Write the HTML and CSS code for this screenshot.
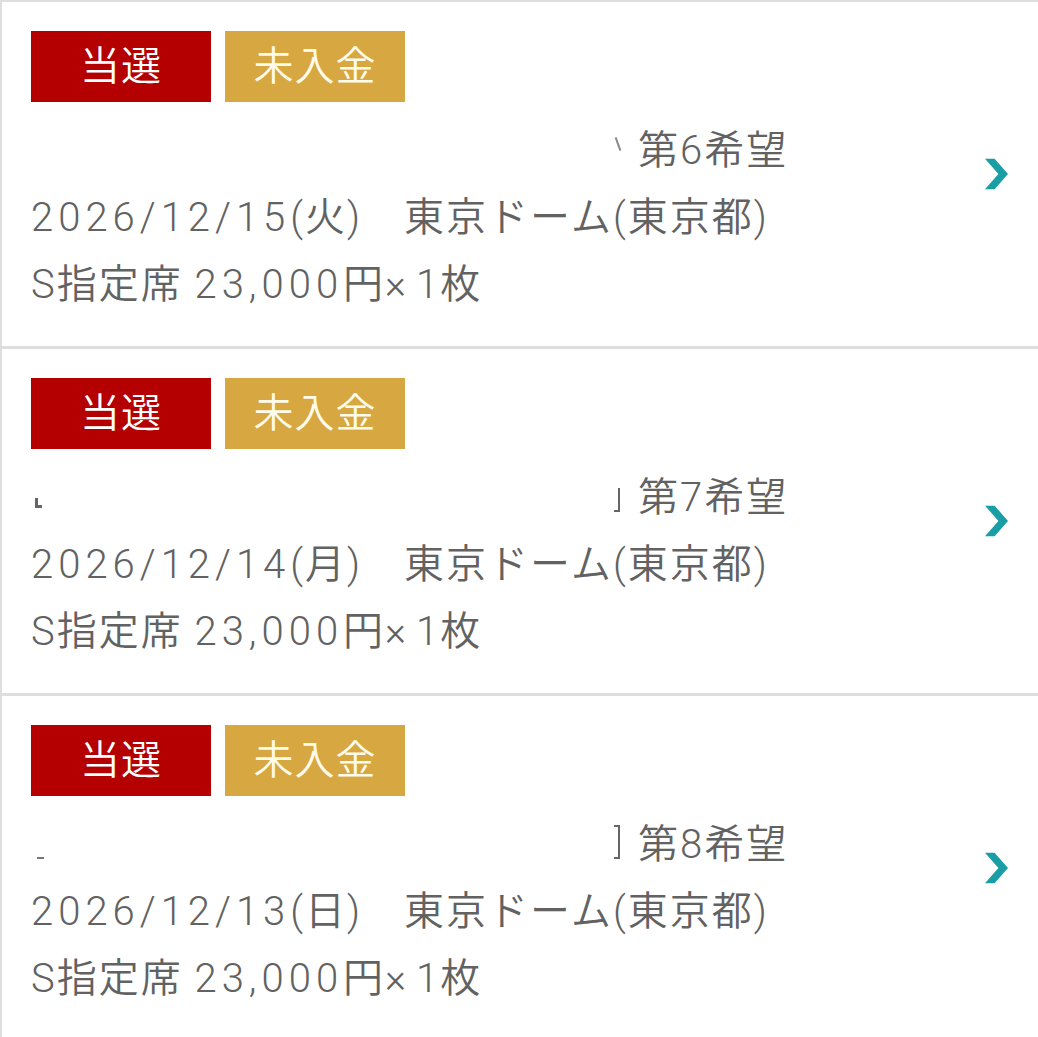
FILE: index.html
```html
<!DOCTYPE html>
<html lang="ja">
<head>
<meta charset="utf-8">
<title>申込履歴</title>
<link rel="stylesheet" href="styles.css">
</head>
<body>
<ul class="list">
  <li class="card">
    <div class="card-body">
      <div class="badges"><span class="badge badge-won">当選</span><span class="badge badge-unpaid">未入金</span></div>
      <p class="line title"><span class="redacted"></span><span class="frag frag-a"></span>第6希望</p>
      <p class="line"><span class="num">2026/12/15</span>(火)　東京ドーム(東京都)</p>
      <p class="line">S指定席 <span class="num">23,000</span>円<span class="qty">×</span>1枚</p>
    </div>
    <svg class="chevron" viewBox="0 0 24 32" aria-hidden="true"><polygon points="0,0 10,0 24,16 10,32 0,32 14,16"/></svg>
  </li>
  <li class="card">
    <div class="card-body">
      <div class="badges"><span class="badge badge-won">当選</span><span class="badge badge-unpaid">未入金</span></div>
      <p class="line title"><span class="redacted"><span class="frag frag-l"></span></span><span class="frag frag-b"></span>第7希望</p>
      <p class="line"><span class="num">2026/12/14</span>(月)　東京ドーム(東京都)</p>
      <p class="line">S指定席 <span class="num">23,000</span>円<span class="qty">×</span>1枚</p>
    </div>
    <svg class="chevron" viewBox="0 0 24 32" aria-hidden="true"><polygon points="0,0 10,0 24,16 10,32 0,32 14,16"/></svg>
  </li>
  <li class="card">
    <div class="card-body">
      <div class="badges"><span class="badge badge-won">当選</span><span class="badge badge-unpaid">未入金</span></div>
      <p class="line title"><span class="redacted"><span class="frag frag-dash"></span></span><span class="frag frag-c"></span>第8希望</p>
      <p class="line"><span class="num">2026/12/13</span>(日)　東京ドーム(東京都)</p>
      <p class="line">S指定席 <span class="num">23,000</span>円<span class="qty">×</span>1枚</p>
    </div>
    <svg class="chevron" viewBox="0 0 24 32" aria-hidden="true"><polygon points="0,0 10,0 24,16 10,32 0,32 14,16"/></svg>
  </li>
</ul>
</body>
</html>
```

FILE: styles.css
```css
html, body {
  margin: 0;
  padding: 0;
  background: #ffffff;
}

body {
  font-family: Roboto, "Noto Sans CJK JP", sans-serif;
  font-weight: 350;
  color: #626262;
}

.list {
  list-style: none;
  margin: 0;
  padding: 0;
  border-top: 2px solid #dedede;
  border-left: 2px solid #dedede;
}

.card {
  display: flex;
  align-items: center;
  justify-content: space-between;
  height: 344px;
  padding: 0 30px 0 29px;
  border-bottom: 3px solid #dedede;
  box-sizing: content-box;
}

.card-body {
  display: flex;
  flex-direction: column;
  align-self: flex-start;
  padding-top: 29px;
}

.badges {
  display: flex;
  gap: 14px;
  margin-bottom: 15px;
}

.badge {
  display: flex;
  align-items: center;
  justify-content: center;
  width: 180px;
  height: 71px;
  font-size: 40px;
  letter-spacing: 1px;
  line-height: 1;
}

.badge-won {
  background: #b40000;
  color: #ffffff;
}

.badge-unpaid {
  background: #d7a842;
  color: #fffbea;
}

.line {
  margin: 0;
  font-size: 40px;
  line-height: 67px;
  letter-spacing: 2px;
  white-space: nowrap;
}

.num {
  letter-spacing: 5px;
}

.qty {
  letter-spacing: 10px;
}

.title {
  display: flex;
  align-items: center;
}

.redacted {
  position: relative;
  display: inline-block;
  width: 579px;
  height: 40px;
}

.frag {
  display: inline-block;
  box-sizing: border-box;
}

.frag-a {
  width: 28px;
  height: 40px;
  position: relative;
}

.frag-a::before {
  content: "";
  position: absolute;
  left: 7px;
  top: 6px;
  width: 2px;
  height: 14px;
  background: #8a8a8a;
  transform: rotate(-20deg);
}

.frag-b,
.frag-c {
  width: 28px;
  height: 40px;
  position: relative;
}

.frag-b::before,
.frag-c::before {
  content: "";
  position: absolute;
  left: 4px;
  bottom: 6px;
  width: 6px;
  height: 24px;
  border-right: 2px solid #666666;
  border-bottom: 2px solid #666666;
  box-sizing: border-box;
}

.frag-c::before {
  height: 34px;
  border-top: 2px solid #666666;
}

.frag-l {
  position: absolute;
  left: 4px;
  top: 20px;
  width: 7px;
  height: 10px;
  border-left: 3px solid #666666;
  border-bottom: 3px solid #666666;
  box-sizing: border-box;
}

.frag-dash {
  position: absolute;
  left: 6px;
  top: 32px;
  width: 7px;
  height: 2px;
  background: #777777;
}

.chevron {
  width: 23px;
  height: 32px;
  flex: none;
  fill: #1a9ea6;
}
```
